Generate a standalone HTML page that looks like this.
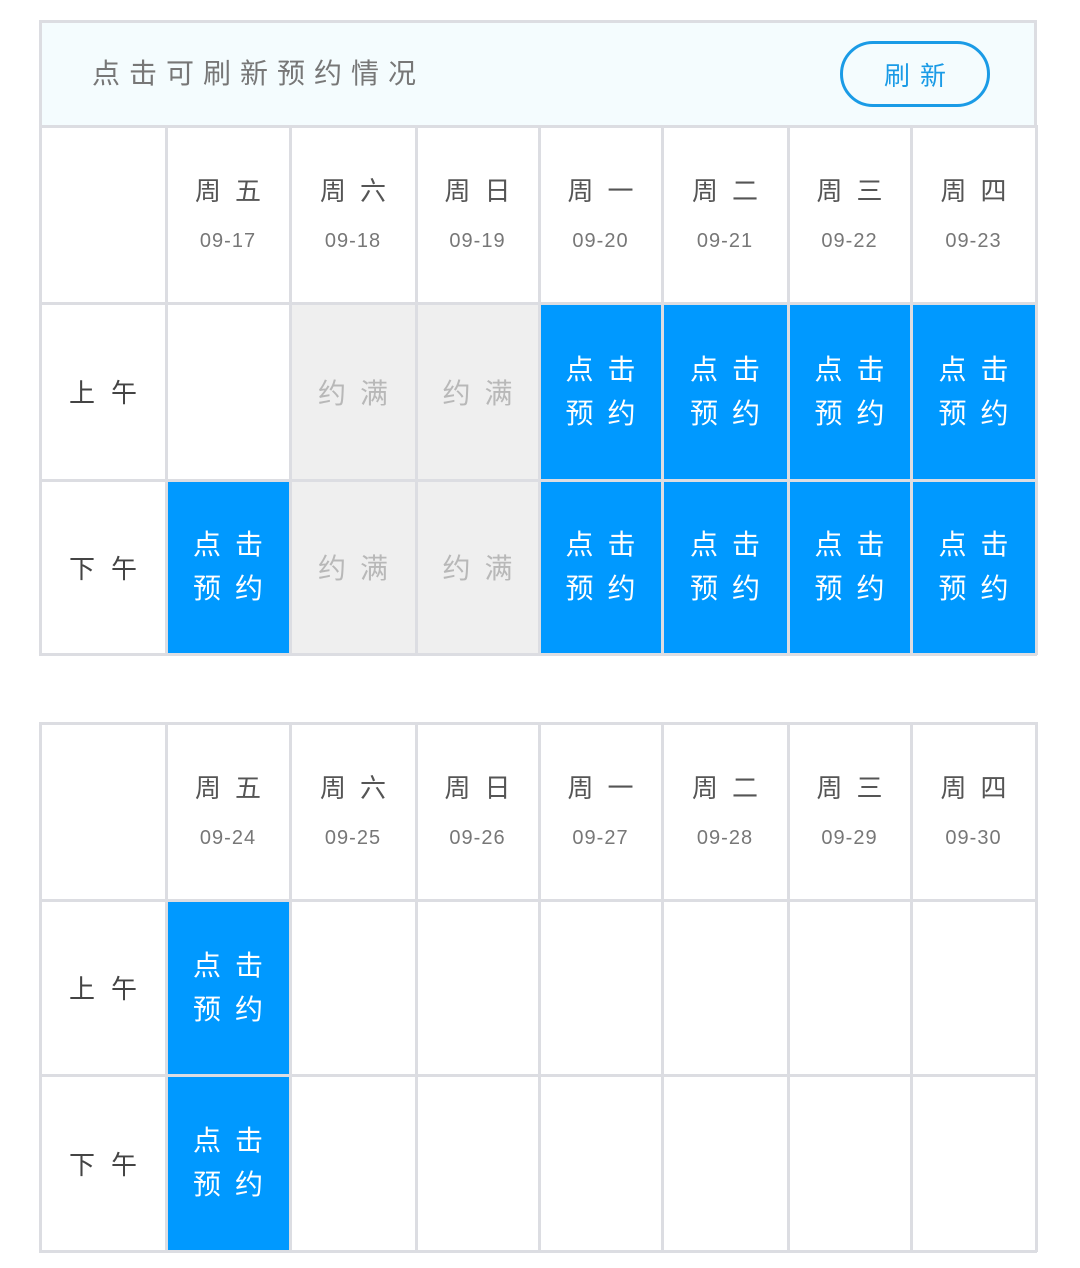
<!DOCTYPE html>
<html><head><meta charset="utf-8"><style>
body{margin:0;width:1080px;height:1268px;background:#fff;position:relative;font-family:"Liberation Sans","Noto Sans CJK SC",sans-serif;overflow:hidden}
.a{position:absolute;box-sizing:border-box}
.h{background:#dcdde2}
.c{display:flex;flex-direction:column;align-items:center;justify-content:center;text-align:center}
.b{background:#0099ff;color:#fff;font-size:28px;line-height:44px;letter-spacing:14px;padding-left:14px}
.g{background:#efefef;color:#b8b8b8;font-size:28px;letter-spacing:14px;padding-left:14px}
.day{color:#555;font-size:26px;letter-spacing:14px;padding-left:14px;line-height:30px}
.dt{color:#777;font-size:20px;margin-top:24px;letter-spacing:1px}
.lab{color:#444;font-size:26px;letter-spacing:16px;padding-left:16px}
</style></head><body>
<div class="a" style="left:41px;top:22px;width:994px;height:103px;background:#f4fcfe"></div>
<div class="a" style="left:92px;top:52px;font-size:28px;color:#777;letter-spacing:9px">点击可刷新预约情况</div>
<div class="a c" style="left:840px;top:41px;width:150px;height:66px;border:3px solid #1a9be6;border-radius:33px;color:#1a9be6;font-size:26px;letter-spacing:10px;padding-left:10px">刷新</div>
<div id="t"></div>
<script>
var X=[40,166,290,416,539,662,788,911,1036];
var days=["周五","周六","周日","周一","周二","周三","周四"];
var out="";
function cell(x1,x2,y1,y2,cls,html){out+='<div class="a c '+cls+'" style="left:'+(x1+1)+'px;top:'+(y1+1)+'px;width:'+(x2-x1-2)+'px;height:'+(y2-y1-2)+'px">'+html+'</div>';}
function table(Y,dates,am,pm,header){
  for(var i=0;i<7;i++){
    cell(X[i+1],X[i+2],Y[0],Y[1],"",'<div class="day">'+days[i]+'</div><div class="dt">'+dates[i]+'</div>');
    [am,pm].forEach(function(r,k){
      var v=r[i];
      if(v=="b")cell(X[i+1],X[i+2],Y[k+1],Y[k+2],"b","点击<br>预约");
      else if(v=="g")cell(X[i+1],X[i+2],Y[k+1],Y[k+2],"g","约满");
    });
  }
  cell(X[0],X[1],Y[1],Y[2],"lab","上午");
  cell(X[0],X[1],Y[2],Y[3],"lab","下午");
  var top=header?header:Y[0];
  X.forEach(function(x){out+='<div class="a h" style="left:'+(x-1)+'px;top:'+(Y[0]-1)+'px;width:3px;height:'+(Y[3]-Y[0]+2)+'px"></div>';});
  out+='<div class="a h" style="left:39px;top:'+(top-1)+'px;width:3px;height:'+(Y[0]-top)+'px"></div>';
  out+='<div class="a h" style="left:1034px;top:'+(top-1)+'px;width:3px;height:'+(Y[0]-top)+'px"></div>';
  if(header)out+='<div class="a h" style="left:39px;top:'+(top-1)+'px;width:998px;height:3px"></div>';
  Y.forEach(function(y){out+='<div class="a h" style="left:39px;top:'+(y-1)+'px;width:998px;height:3px"></div>';});
}
table([126,303,480,654],["09-17","09-18","09-19","09-20","09-21","09-22","09-23"],["","g","g","b","b","b","b"],["b","g","g","b","b","b","b"],21);
table([723,900,1075,1251],["09-24","09-25","09-26","09-27","09-28","09-29","09-30"],["b","","","","","",""],["b","","","","","",""]);
document.getElementById("t").innerHTML=out;
</script>
</body></html>
